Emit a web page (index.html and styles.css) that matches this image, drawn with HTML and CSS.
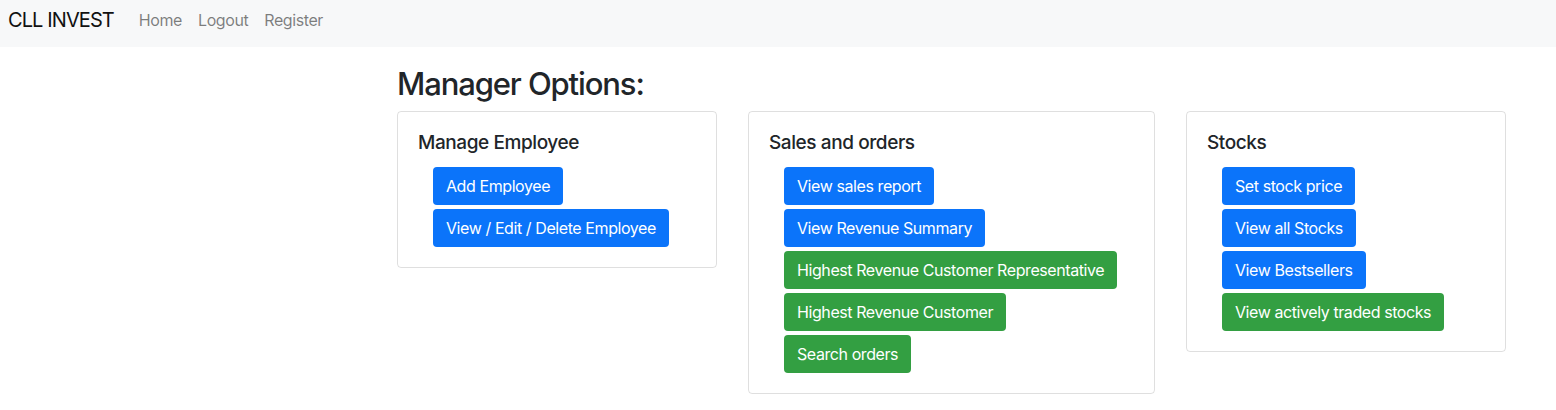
FILE: index.html
```html
<!DOCTYPE html>
<html>
<head>
<meta charset="utf-8">
<link rel="stylesheet" href="styles.css">
</head>
<body>
<nav class="navbar">
  <a class="brand" href="#">CLL INVEST</a>
  <a class="nav-link" href="#">Home</a>
  <a class="nav-link" href="#">Logout</a>
  <a class="nav-link" href="#">Register</a>
</nav>
<main class="main">
  <h2 class="page-title">Manager Options:</h2>
  <div class="cards">
    <section class="card card-sm">
      <h5 class="card-title">Manage Employee</h5>
      <div class="btn-list">
        <a class="btn btn-primary" href="#">Add Employee</a>
        <a class="btn btn-primary" href="#">View / Edit / Delete Employee</a>
      </div>
    </section>
    <section class="card card-lg">
      <h5 class="card-title">Sales and orders</h5>
      <div class="btn-list">
        <a class="btn btn-primary" href="#">View sales report</a>
        <a class="btn btn-primary" href="#">View Revenue Summary</a>
        <a class="btn btn-success" href="#">Highest Revenue Customer Representative</a>
        <a class="btn btn-success" href="#">Highest Revenue Customer</a>
        <a class="btn btn-success" href="#">Search orders</a>
      </div>
    </section>
    <section class="card card-sm">
      <h5 class="card-title">Stocks</h5>
      <div class="btn-list">
        <a class="btn btn-primary" href="#">Set stock price</a>
        <a class="btn btn-primary" href="#">View all Stocks</a>
        <a class="btn btn-primary" href="#">View Bestsellers</a>
        <a class="btn btn-success" href="#">View actively traded stocks</a>
      </div>
    </section>
  </div>
</main>
</body>
</html>
```
FILE: styles.css
```css
* { box-sizing: border-box; }
body {
  margin: 0;
  font-family: Inter, "Liberation Sans", sans-serif;
  font-size: 16px;
  line-height: 1.5;
  letter-spacing: -0.026em;
  color: #212529;
  background: #fff;
}
.navbar {
  display: flex;
  align-items: center;
  height: 47px;
  padding: 0 8px 7px;
  background: #f7f8f9;
}
.brand {
  font-size: 20px;
  letter-spacing: -0.045em;
  color: #111;
  text-decoration: none;
  margin-right: 17px;
}
.nav-link {
  color: rgba(0,0,0,.5);
  text-decoration: none;
  padding: 0 8px;
}
.main {
  padding-left: 397px;
  padding-top: 18px;
}
.page-title {
  margin: 0 0 9px;
  font-size: 31px;
  font-weight: 500;
  line-height: 1.2;
  letter-spacing: -0.036em;
}
.cards {
  display: flex;
  align-items: flex-start;
  gap: 31px;
}
.card {
  border: 1px solid rgba(0,0,0,.125);
  border-radius: 4px;
  padding: 20px;
}
.card-sm { width: 320px; }
.card-lg { width: 407px; }
.card-title {
  margin: 0 0 12px;
  font-size: 19px;
  font-weight: 500;
  line-height: 1.2;
}
.btn-list {
  display: flex;
  flex-direction: column;
  align-items: flex-start;
  gap: 4px;
  padding-left: 15px;
}
.btn {
  display: inline-block;
  padding: 6px 12px;
  border: 1px solid transparent;
  border-radius: 4px;
  color: #fff;
  text-decoration: none;
  font-size: 16px;
  line-height: 24px;
}
.btn-primary { background: #0b74fa; }
.btn-success { background: #339f42; }
```
